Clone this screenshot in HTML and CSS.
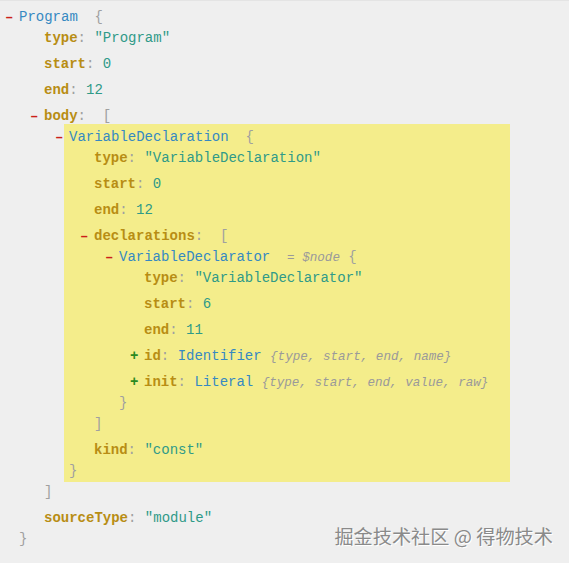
FILE: index.html
```html
<!DOCTYPE html>
<html>
<head>
<meta charset="utf-8">
<link rel="stylesheet" href="styles.css">
</head>
<body>
<div class="panel">
  <div class="node">
    <div class="line"><span class="tog minus">–</span><span class="tn">Program</span><span class="p">  {</span></div>
    <div class="props">
      <div class="line"><span class="k">type</span><span class="p">: </span><span class="s">"Program"</span></div>
      <div class="line"><span class="k">start</span><span class="p">: </span><span class="n">0</span></div>
      <div class="line"><span class="k">end</span><span class="p">: </span><span class="n">12</span></div>
      <div class="prop">
        <div class="line"><span class="tog minus">–</span><span class="k">body</span><span class="p">:  [</span></div>
        <div class="items">
          <div class="node hl">
            <div class="line"><span class="tog minus">–</span><span class="tn">VariableDeclaration</span><span class="p">  {</span></div>
            <div class="props">
              <div class="line"><span class="k">type</span><span class="p">: </span><span class="s">"VariableDeclaration"</span></div>
              <div class="line"><span class="k">start</span><span class="p">: </span><span class="n">0</span></div>
              <div class="line"><span class="k">end</span><span class="p">: </span><span class="n">12</span></div>
              <div class="prop">
                <div class="line"><span class="tog minus">–</span><span class="k">declarations</span><span class="p">:  [</span></div>
                <div class="items">
                  <div class="node">
                    <div class="line"><span class="tog minus">–</span><span class="tn">VariableDeclarator</span>  <span class="compact">= $node</span><span class="p"> {</span></div>
                    <div class="props">
                      <div class="line"><span class="k">type</span><span class="p">: </span><span class="s">"VariableDeclarator"</span></div>
                      <div class="line"><span class="k">start</span><span class="p">: </span><span class="n">6</span></div>
                      <div class="line"><span class="k">end</span><span class="p">: </span><span class="n">11</span></div>
                      <div class="line"><span class="tog plus">+</span><span class="k">id</span><span class="p">: </span><span class="tn">Identifier</span> <span class="compact">{type, start, end, name}</span></div>
                      <div class="line"><span class="tog plus">+</span><span class="k">init</span><span class="p">: </span><span class="tn">Literal</span> <span class="compact">{type, start, end, value, raw}</span></div>
                    </div>
                    <div class="line"><span class="p">}</span></div>
                  </div>
                </div>
                <div class="line"><span class="p">]</span></div>
              </div>
              <div class="line"><span class="k">kind</span><span class="p">: </span><span class="s">"const"</span></div>
            </div>
            <div class="line"><span class="p">}</span></div>
          </div>
        </div>
        <div class="line"><span class="p">]</span></div>
      </div>
      <div class="line"><span class="k">sourceType</span><span class="p">: </span><span class="s">"module"</span></div>
    </div>
    <div class="line"><span class="p">}</span></div>
  </div>
  <div class="watermark">掘金技术社区 @ 得物技术</div>
</div>
</body>
</html>
```

FILE: styles.css
```css
html, body {
  margin: 0;
  padding: 0;
  background: #efefef;
}
.panel {
  position: relative;
  height: 562px;
  border-top: 1px solid #e4e4e4;
  padding: 6px 59px 0 19px;
  box-sizing: border-box;
  font-family: "Liberation Mono", "Courier New", monospace;
  font-size: 14px;
  color: #999;
}
.line {
  height: 21px;
  line-height: 21px;
  white-space: pre;
}
.props {
  display: flex;
  flex-direction: column;
  gap: 5px;
  padding-left: 25px;
}
.items {
  padding-left: 25px;
}
.hl {
  background: #f4ed8b;
  margin: -3px 0 0 -5px;
  padding: 3px 0 0 5px;
}
.tog {
  display: inline-block;
  width: 14px;
  margin-left: -14px;
  font-weight: bold;
}
.minus { color: #cc1f1a; }
.plus { color: #2b8a1f; }
.tn { color: #3689c2; }
.k { color: #b88d14; font-weight: bold; }
.p { color: #a0a0a0; }
.s, .n { color: #2f9a88; }
.compact {
  font-size: 12.6px;
  font-style: italic;
  color: #9a9a9a;
}
.watermark {
  position: absolute;
  right: 16px;
  bottom: 14px;
  font-family: "Noto Sans CJK SC", sans-serif;
  font-size: 19.2px;
  line-height: 24px;
  color: #8a8a8a;
  text-shadow: 1px 1px 0 #ffffff;
}
```
